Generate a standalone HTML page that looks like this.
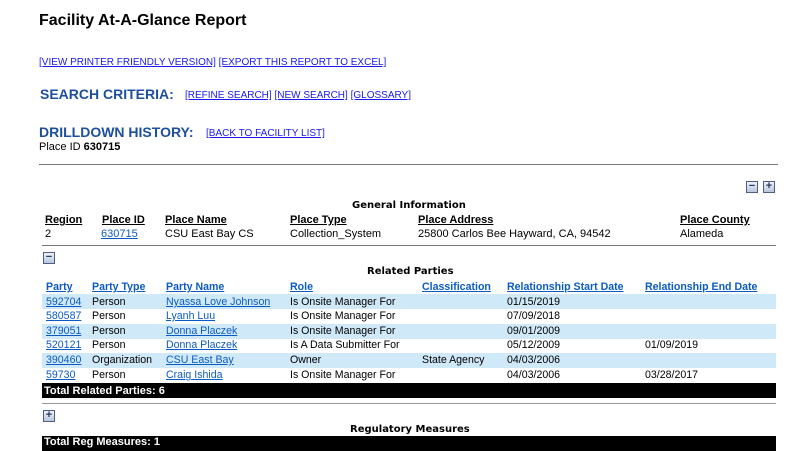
<!DOCTYPE html>
<html><head><style>
body{margin:0;width:798px;height:447px;overflow:hidden;background:#fff;font-family:"Liberation Sans",Arial,sans-serif;position:relative}
.a{position:absolute;white-space:nowrap}
a{color:#1a1aee;text-decoration:underline}
.lk{font-size:10px}
.h{font-size:14px;font-weight:bold;color:#1d4f9c}
.th{font-size:11px;font-weight:bold;text-decoration:underline;color:#000}
.tl{font-size:10.6px;font-weight:bold;text-decoration:underline;color:#0b5bc4}
.td{font-size:10.6px;color:#000}
.tdl{font-size:10.6px;color:#0b5bc4;text-decoration:underline}
.row{position:absolute;left:42px;width:734px;height:15px}
.blue{background:#cfe9f9}
.ic{position:absolute;width:12px;height:12px;border:1px solid #4d5f85;background:linear-gradient(#eef2fa,#b9c6dd);box-sizing:border-box;font-size:11px;line-height:9px;text-align:center;color:#2b3a5c;font-weight:bold}
.bar{position:absolute;left:42px;width:734px;background:#000;color:#fff;font-size:11px;font-weight:bold;padding-left:2px;box-sizing:border-box}
.sec{font-family:"DejaVu Sans",sans-serif;font-size:10px;font-weight:bold}
</style></head><body>
<div class="a" style="left:39px;top:12px;font-size:16px;font-weight:bold">Facility At-A-Glance Report</div>
<div class="a lk" style="left:39px;top:57px"><a>[VIEW PRINTER FRIENDLY VERSION]</a> <a>[EXPORT THIS REPORT TO EXCEL]</a></div>
<div class="a h" style="left:40px;top:86px">SEARCH CRITERIA:</div>
<div class="a lk" style="left:185px;top:90px"><a>[REFINE SEARCH]</a> <a>[NEW SEARCH]</a> <a>[GLOSSARY]</a></div>
<div class="a h" style="left:39px;top:124px">DRILLDOWN HISTORY:</div>
<div class="a lk" style="left:206px;top:128px"><a>[BACK TO FACILITY LIST]</a></div>
<div class="a" style="left:39px;top:141px;font-size:11px">Place ID <b>630715</b></div>
<div class="a" style="left:39px;top:164px;width:739px;height:1px;background:#777"></div>

<div class="ic" style="left:746px;top:181px">−</div>
<div class="ic" style="left:763px;top:181px">+</div>
<div class="a sec" style="left:352px;top:200px">General Information</div>
<div class="a th" style="left:45px;top:214px">Region</div>
<div class="a th" style="left:102px;top:214px">Place ID</div>
<div class="a th" style="left:165px;top:214px">Place Name</div>
<div class="a th" style="left:290px;top:214px">Place Type</div>
<div class="a th" style="left:418px;top:214px">Place Address</div>
<div class="a th" style="left:680px;top:214px">Place County</div>
<div class="a td" style="left:45px;top:228px;font-size:11px">2</div>
<div class="a tdl" style="left:101px;top:228px;font-size:11px">630715</div>
<div class="a td" style="left:165px;top:228px;font-size:11px">CSU East Bay CS</div>
<div class="a td" style="left:290px;top:228px;font-size:11px">Collection_System</div>
<div class="a td" style="left:418px;top:228px;font-size:11px">25800 Carlos Bee Hayward, CA, 94542</div>
<div class="a td" style="left:680px;top:228px;font-size:11px">Alameda</div>
<div class="a" style="left:42px;top:245px;width:734px;height:1px;background:#777"></div>

<div class="ic" style="left:43px;top:252px">−</div>
<div class="a sec" style="left:367px;top:266px">Related Parties</div>
<div class="a tl" style="left:46px;top:281px">Party</div>
<div class="a tl" style="left:92px;top:281px">Party Type</div>
<div class="a tl" style="left:166px;top:281px">Party Name</div>
<div class="a tl" style="left:290px;top:281px">Role</div>
<div class="a tl" style="left:422px;top:281px">Classification</div>
<div class="a tl" style="left:507px;top:281px">Relationship Start Date</div>
<div class="a tl" style="left:645px;top:281px">Relationship End Date</div>

<div class="row blue" style="top:294px"></div>
<div class="row" style="top:309px"></div>
<div class="row blue" style="top:324px"></div>
<div class="row" style="top:338px"></div>
<div class="row blue" style="top:353px"></div>
<div class="row" style="top:368px"></div>

<div class="a tdl" style="left:46px;top:296px">592704</div><div class="a td" style="left:92px;top:296px">Person</div><div class="a tdl" style="left:166px;top:296px">Nyassa Love Johnson</div><div class="a td" style="left:290px;top:296px">Is Onsite Manager For</div><div class="a td" style="left:507px;top:296px">01/15/2019</div>
<div class="a tdl" style="left:46px;top:310px">580587</div><div class="a td" style="left:92px;top:310px">Person</div><div class="a tdl" style="left:166px;top:310px">Lyanh Luu</div><div class="a td" style="left:290px;top:310px">Is Onsite Manager For</div><div class="a td" style="left:507px;top:310px">07/09/2018</div>
<div class="a tdl" style="left:46px;top:325px">379051</div><div class="a td" style="left:92px;top:325px">Person</div><div class="a tdl" style="left:166px;top:325px">Donna Placzek</div><div class="a td" style="left:290px;top:325px">Is Onsite Manager For</div><div class="a td" style="left:507px;top:325px">09/01/2009</div>
<div class="a tdl" style="left:46px;top:339px">520121</div><div class="a td" style="left:92px;top:339px">Person</div><div class="a tdl" style="left:166px;top:339px">Donna Placzek</div><div class="a td" style="left:290px;top:339px">Is A Data Submitter For</div><div class="a td" style="left:507px;top:339px">05/12/2009</div><div class="a td" style="left:645px;top:339px">01/09/2019</div>
<div class="a tdl" style="left:46px;top:354px">390460</div><div class="a td" style="left:92px;top:354px">Organization</div><div class="a tdl" style="left:166px;top:354px">CSU East Bay</div><div class="a td" style="left:290px;top:354px">Owner</div><div class="a td" style="left:422px;top:354px">State Agency</div><div class="a td" style="left:507px;top:354px">04/03/2006</div>
<div class="a tdl" style="left:46px;top:369px">59730</div><div class="a td" style="left:92px;top:369px">Person</div><div class="a tdl" style="left:166px;top:369px">Craig Ishida</div><div class="a td" style="left:290px;top:369px">Is Onsite Manager For</div><div class="a td" style="left:507px;top:369px">04/03/2006</div><div class="a td" style="left:645px;top:369px">03/28/2017</div>

<div class="bar" style="top:383px;height:15px;line-height:16px">Total Related Parties: 6</div>
<div class="a" style="left:42px;top:403px;width:734px;height:1px;background:#999"></div>
<div class="ic" style="left:43px;top:410px">+</div>
<div class="a sec" style="left:350px;top:424px">Regulatory Measures</div>
<div class="bar" style="top:436px;height:15px;line-height:13px">Total Reg Measures: 1</div>
</body></html>
